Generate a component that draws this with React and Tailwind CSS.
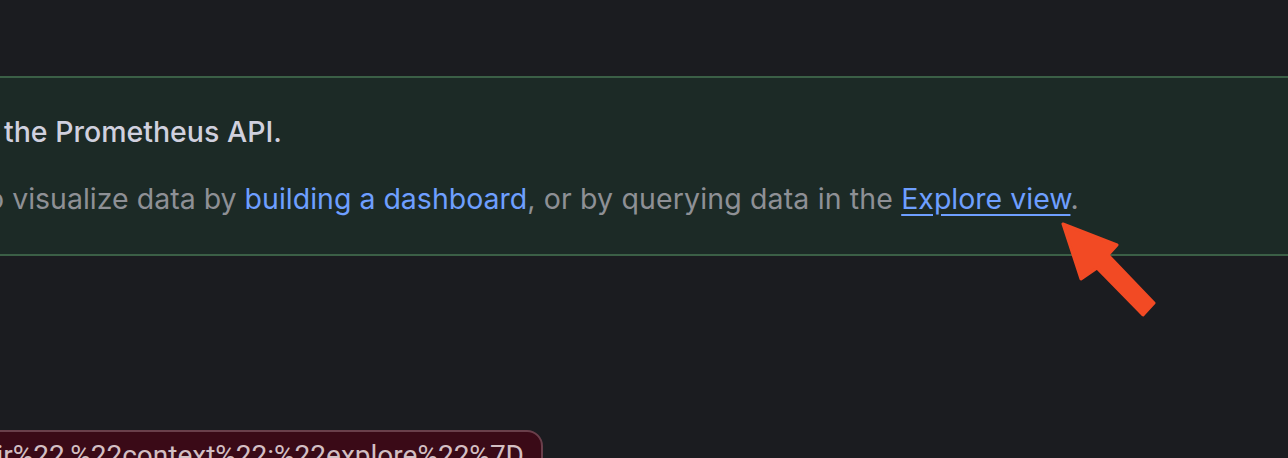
import React from "react";

function Arrow() {
  return (
    <svg
      className="absolute left-0 top-0 pointer-events-none"
      width="1288"
      height="458"
      viewBox="0 0 1288 458">
      <polygon
        points="1063,224 1117,245 1108,255 1154,303 1143,315 1097,268 1081,279"
        fill="#f24a24"
        stroke="#f24a24"
        strokeWidth="3"
        strokeLinejoin="round"
      />
    </svg>
  );
}

export default function App() {
  return (
    <div
      className="relative w-[1288px] h-[458px] overflow-hidden bg-[#1b1c20]"
      style={{ fontFamily: "Inter, 'Noto Sans', sans-serif" }}>
      <div className="h-[76px]" />

      {/* success alert */}
      <div className="-mx-4 h-[180px] border-y-2 border-[#3b5f46] bg-[#1c2a26]">
        <div className="-ml-[6px] pt-[34px] text-[28.5px] leading-[40px]">
          <p className="font-medium text-[#d0d0de] whitespace-nowrap">
            <span className="ml-[26px]">the Prometheus API.</span>
          </p>
          <p className="mt-[27px] text-[#8e9095] whitespace-nowrap">
            to visualize data by{" "}
            <span className="text-[#6e9fff]">building a dashboard</span>
            <span className="tracking-[0.14px]">, or by querying data in the </span>
            <span className="text-[#6e9fff] underline underline-offset-[5px]">
              Explore view
            </span>
            .
          </p>
        </div>
      </div>

      <div className="h-[174px]" />

      {/* error alert */}
      <div className="-ml-4 w-[559px] h-[60px] rounded-tr-[16px] border-2 border-[#6a3f4b] bg-[#3a0a17] overflow-hidden flex justify-end pr-[17px]">
        <p
          className="pt-[4px] text-[28px] leading-[40px] text-[#d3bfc3] whitespace-nowrap"
          style={{ fontFamily: "Roboto, 'Liberation Sans', sans-serif" }}>
          %22pair%22,%22context%22:%22explore%22%7D
        </p>
      </div>

      <Arrow />
    </div>
  );
}
